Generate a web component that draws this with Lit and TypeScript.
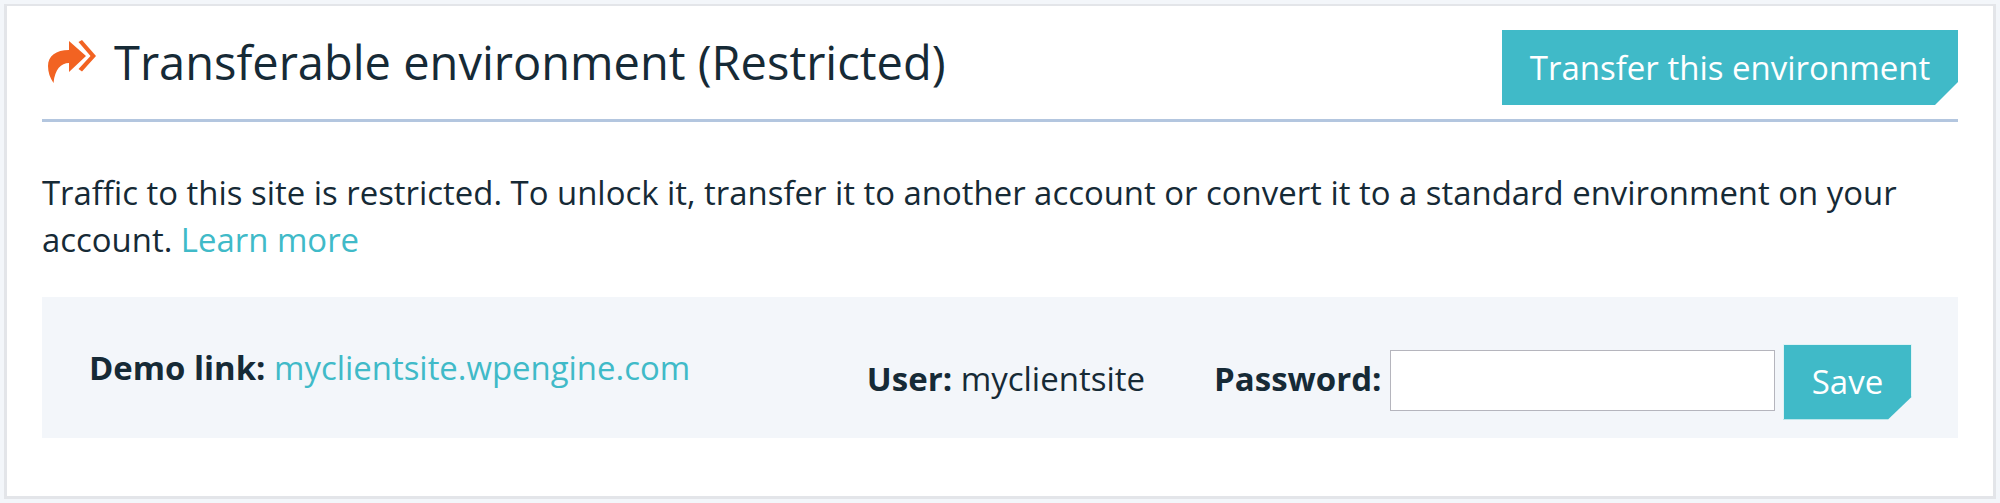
import { LitElement, html, css } from "lit";
import { customElement } from "lit/decorators.js";

@customElement("app-root")
export class AppRoot extends LitElement {
  static styles = css`
    :host {
      display: block;
      box-sizing: border-box;
      height: 503px;
      padding: 4px;
      background: #f3f6fa;
      font-family: "Open Sans", "Noto Sans", sans-serif;
      color: #162a36;
    }
    .card {
      box-sizing: border-box;
      height: 495px;
      background: #fff;
      border: 3px solid #e3e5e9;
      border-top-width: 2px;
      padding: 24px 35px 0;
    }
    .head {
      display: flex;
      justify-content: space-between;
      align-items: flex-start;
      height: 89px;
      border-bottom: 3px solid #b3c6df;
    }
    .title {
      display: flex;
      align-items: center;
      height: 64px;
    }
    .title svg {
      width: 50px;
      height: 46px;
      margin: 0 17px 0 5px;
      flex: none;
    }
    h1 {
      margin: 0;
      font-size: 47px;
      font-weight: 400;
      line-height: 64px;
    }
    .btn {
      box-sizing: border-box;
      border: none;
      background: #40bac8;
      color: #fff;
      font-family: inherit;
      font-weight: 400;
      font-size: 33px;
      display: flex;
      align-items: center;
      justify-content: center;
      padding: 0;
    }
    .transfer {
      width: 456px;
      height: 75px;
      clip-path: polygon(0 0, 100% 0, 100% 52px, 433px 100%, 0 100%);
    }
    .intro {
      margin: 47px 0 0;
      font-size: 32.9px;
      line-height: 47px;
    }
    a {
      color: #40bac8;
      text-decoration: none;
    }
    .panel {
      display: flex;
      align-items: center;
      box-sizing: border-box;
      height: 141px;
      margin-top: 34px;
      padding: 25px 46px 0 47px;
      background: #f3f6fa;
      font-size: 33px;
    }
    .demo {
      flex: 1;
      margin-bottom: 26px;
      white-space: nowrap;
      font-size: 32.9px;
    }
    b {
      font-weight: 700;
    }
    .user {
      margin: 0 69px 4px 0;
    }
    .pw {
      margin: 0 8.5px 4px 0;
    }
    input {
      box-sizing: border-box;
      width: 385px;
      height: 61px;
      margin: 0 8px 0 0;
      padding: 0;
      background: #fff;
      border: 1px solid #b5b5bd;
      outline: none;
    }
    .save {
      width: 129px;
      height: 76px;
      margin-top: 3px;
      border: 1px solid #dff3f5;
      clip-path: polygon(0 0, 100% 0, 100% 53px, 105px 100%, 0 100%);
    }
  `;

  render() {
    return html`
      <div class="card">
        <div class="head">
          <div class="title">
            <svg viewBox="0 0 50 46" aria-hidden="true">
              <path
                fill="#f26322"
                d="M22 2 L39 17 L22 33 L22 24 C14 24 8 30 6.5 44 C3 39 1 33 1 27 C1 17 9 11 22 11 Z"
              />
              <path
                fill="#f26322"
                d="M31.5 3 L35 1 L49 17 L35 32.5 L31.5 30 L43.5 17 Z"
              />
            </svg>
            <h1>Transferable environment (Restricted)</h1>
          </div>
          <button class="btn transfer">Transfer this environment</button>
        </div>
        <p class="intro">
          Traffic to this site is restricted. To unlock it, transfer it to another account or convert it to a standard environment on your
          account. <a href="#">Learn more</a>
        </p>
        <div class="panel">
          <div class="demo"><b>Demo link:</b> <a href="#">myclientsite.wpengine.com</a></div>
          <div class="user"><b>User:</b> myclientsite</div>
          <b class="pw">Password:</b>
          <input type="password" />
          <button class="btn save">Save</button>
        </div>
      </div>
    `;
  }
}
